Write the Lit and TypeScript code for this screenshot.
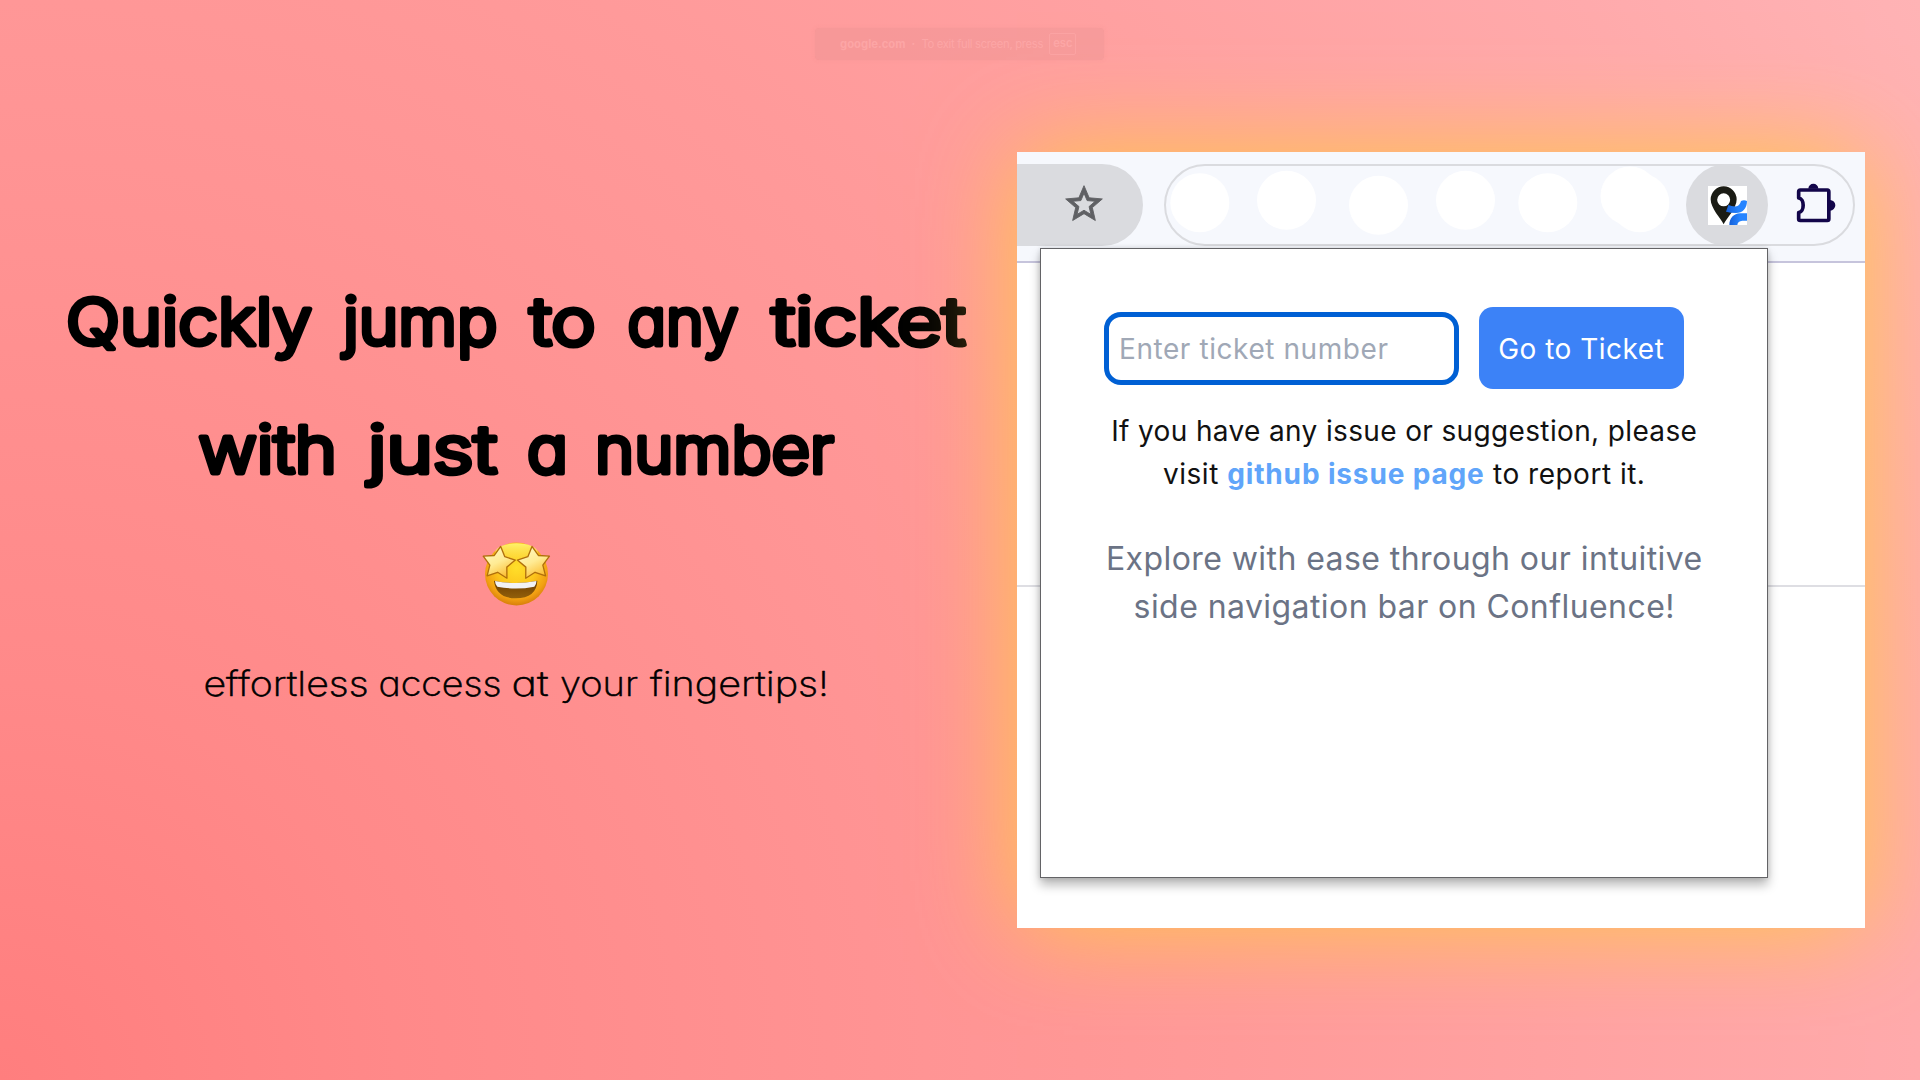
import { LitElement, html, svg, css } from "lit";
import { customElement } from "lit/decorators.js";

type Word = { t: string; x: number; w: number; y: number };

const HEADLINE: Word[] = [
  { t: "Quickly", x: 66, w: 246, y: 75 },
  { t: "jump", x: 343, w: 154.5, y: 75 },
  { t: "to", x: 529.5, w: 66, y: 75 },
  { t: "any", x: 627.5, w: 111, y: 75 },
  { t: "ticket", x: 771.5, w: 194, y: 75 },
  { t: "with", x: 198.5, w: 138.5, y: 203 },
  { t: "just", x: 368, w: 129, y: 203 },
  { t: "a", x: 527, w: 41, y: 203 },
  { t: "number", x: 595, w: 239, y: 203 },
];

const TAGLINE: Word[] = [
  { t: "effortless", x: 203.5, w: 165, y: 41 },
  { t: "access", x: 378.5, w: 123, y: 41 },
  { t: "at", x: 511.5, w: 37, y: 41 },
  { t: "your", x: 560, w: 78, y: 41 },
  { t: "fingertips!", x: 650, w: 179, y: 41 },
];

const words = (list: Word[]) =>
  list.map((w) => svg`<text x=${w.x} y=${w.y} textLength=${w.w} lengthAdjust="spacingAndGlyphs">${w.t}</text>`);

@customElement("promo-copy")
export class PromoCopy extends LitElement {
  static styles = css`
    :host { display: flex; flex-direction: column; width: 1017px; padding-top: 270px; box-sizing: border-box; }
    svg { display: block; }
    .headline text {
      font: 300 65px Inter, "Noto Sans", sans-serif;
      font-feature-settings: "cv11" 1, "ss03" 1;
      stroke: #000; stroke-width: 5; stroke-linejoin: round; fill: #000;
    }
    .emoji { margin: 0 0 0 480px; }
    .tagline { margin-top: 43px; }
    .tagline text {
      font: 200 34px Inter, "Noto Sans", sans-serif;
      font-feature-settings: "cv11" 1;
      stroke: #000; stroke-width: 0.6; stroke-linejoin: round;
    }
  `;
  render() {
    const star = (cx: number, rot: number) => {
      const pts: string[] = [];
      for (let i = 0; i < 10; i++) {
        const r = i % 2 ? 27 : 51;
        const a = (Math.PI / 5) * i - Math.PI / 2 + rot;
        pts.push(`${(cx + r * Math.cos(a)).toFixed(1)},${(130 + r * Math.sin(a)).toFixed(1)}`);
      }
      return svg`<polygon points=${pts.join(" ")} fill="url(#s)" stroke="#b06f0c" stroke-width="4" stroke-linejoin="round"/>`;
    };
    return html`
      <svg class="headline" width="1017" height="264" viewBox="0 0 1017 264">${words(HEADLINE)}</svg>
      <svg class="emoji" width="73" height="78" viewBox="60 42 219 234">
        <defs>
          <radialGradient id="f" cx=".5" cy=".4" r=".62">
            <stop offset="0" stop-color="#ffdf2a" /><stop offset=".5" stop-color="#fcc41c" />
            <stop offset=".8" stop-color="#f2a012" /><stop offset="1" stop-color="#d3780a" />
          </radialGradient>
          <linearGradient id="h" x1="0" y1="0" x2="0" y2="1">
            <stop offset="0" stop-color="#fff36a" /><stop offset="1" stop-color="#fff36a" stop-opacity="0" />
          </linearGradient>
          <linearGradient id="s" x1=".2" y1="0" x2=".7" y2="1">
            <stop offset="0" stop-color="#fff9c4" /><stop offset=".5" stop-color="#ffeb94" /><stop offset="1" stop-color="#fbb929" />
          </linearGradient>
          <linearGradient id="m" x1="0" y1="0" x2="0" y2="1">
            <stop offset="0" stop-color="#6b3c02" /><stop offset="1" stop-color="#93600a" />
          </linearGradient>
        </defs>
        <circle cx="169.5" cy="162" r="94.5" fill="url(#f)" />
        <ellipse cx="169.5" cy="98" rx="64" ry="28" fill="url(#h)" />
        <path d="M102 182 Q169.500 196 232 182 Q230 234 167 235 Q108 234 102 182Z" fill="url(#m)" />
        <path d="M105 183 Q167 195 229 183 Q230 193 223 200 Q167 211 112 200 Q105 193 105 183Z" fill="#f2f2f5" />
        ${star(116, 0.12)} ${star(222, -0.12)}
      </svg>
      <svg class="tagline" width="1017" height="60" viewBox="0 0 1017 60">${words(TAGLINE)}</svg>
    `;
  }
}

@customElement("browser-shot")
export class BrowserShot extends LitElement {
  static styles = css`
    :host {
      display: block; position: relative; width: 848px; height: 776px; margin-top: 152px;
      background: #fff; box-shadow: 0 0 94px rgb(255, 200, 76);
      font-family: Inter, "Liberation Sans", sans-serif;
    }
    .toolbar {
      display: flex; align-items: flex-start; height: 111px; box-sizing: border-box; padding-top: 12px;
      background: #f6f8fd; border-bottom: 2px solid #c6c4dc;
    }
    .address { width: 125.5px; height: 82px; border-radius: 0 41px 41px 0; background: #dadbdf; display: flex; }
    .address svg { margin: 18px 0 0 45px; }
    .extensions {
      display: flex; margin-left: 21.5px; width: 691px; height: 82px; box-sizing: border-box;
      border: 2px solid #dadbdf; border-radius: 41px;
    }
    .blobs { width: 520px; height: 78px; flex: none; }
    .active {
      flex: none; width: 82px; height: 82px; border-radius: 50%; background: #dadbdf; margin-top: -2px;
      display: flex; align-items: center; justify-content: center;
    }
    .puzzle { margin: 15.5px 0 0 27px; flex: none; }
    .divider { height: 2px; margin-top: 322px; background: #dedee3; }
    .popup {
      position: absolute; left: 23px; top: 96px; width: 727.5px; height: 630px; box-sizing: border-box;
      border: 1.5px solid #636366; background: #fff; padding: 58px 62px 0 63px;
      box-shadow: 0 7px 10px rgba(0, 0, 0, 0.28), 0 0 5px rgba(0, 0, 0, 0.14);
    }
    .row { display: flex; align-items: center; gap: 19.5px; }
    .field {
      width: 355px; height: 73px; box-sizing: border-box; border: 5px solid #0060d4; border-radius: 17px;
      padding: 1px 10px 0 10px; display: flex; align-items: center; font-size: 28px; letter-spacing: 0.57px;
      color: #a0a8b6; white-space: nowrap;
    }
    .go {
      width: 205.5px; height: 82px; border: 0; border-radius: 14px; background: #3c82f7; color: #fff; padding: 1px 0 0;
      font: 400 28px Inter, "Liberation Sans", sans-serif; letter-spacing: 0.5px; white-space: nowrap;
    }
    .help {
      margin: 21px 0 0; font-size: 28px; line-height: 43.3px; letter-spacing: 0.36px;
      text-align: center; color: #111; white-space: nowrap;
    }
    .help .second { letter-spacing: 0.5px; }
    .help b { font-weight: 700; letter-spacing: 0.85px; color: #60a5fa; }
    .about {
      margin: 38px 0 0; font-size: 32px; line-height: 48.5px; letter-spacing: 0.43px;
      text-align: center; color: #6b7385; white-space: nowrap;
    }
    .line { display: block; width: max-content; margin: 0 auto; }
  `;
  render() {
    return html`
      <div class="toolbar">
        <div class="address">
          <svg width="44" height="44" viewBox="0 0 24 24" fill="#5f6064" stroke="#5f6064" stroke-width=".5"><path d="M22 9.240l-7.190-.62L12 2 9.190 8.630 2 9.240l5.460 4.730L5.820 21 12 17.270 18.180 21l-1.630-7.030L22 9.240zM12 15.400l-3.760 2.270 1-4.280-3.320-2.880 4.380-.38L12 6.100l1.710 4.040 4.380.38-3.320 2.880 1 4.280L12 15.400z" /></svg>
        </div>
        <div class="extensions">
          <svg class="blobs" viewBox="1167 166 520 78" fill="#fff">
            <circle cx="1200.8" cy="202.7" r="29.5" /><circle cx="1287.5" cy="200.3" r="29.5" />
            <circle cx="1379.5" cy="205.3" r="29.5" /><circle cx="1466.5" cy="200.3" r="29.5" />
            <circle cx="1548.8" cy="202.7" r="29.5" /><circle cx="1631" cy="196" r="29.5" />
            <circle cx="1640.8" cy="202.7" r="29.5" />
          </svg>
          <div class="active">
            <svg width="39" height="39" viewBox="144 93 117 117">
              <defs><linearGradient id="b" x1="0" x2="1"><stop offset="0" stop-color="#1660d8" /><stop offset=".6" stop-color="#2684ff" /></linearGradient></defs>
              <rect x="144" y="93" width="117" height="117" fill="#fff" />
              <path fill-rule="evenodd" fill="#1a1b14" d="M191 208C182 190 152 160 152 133A39 39 0 0 1 230 133C230 160 200 190 191 208ZM191 115A19.500 19.500 0 1 0 191 154A19.500 19.500 0 1 0 191 115Z" />
              <path fill="url(#b)" d="M205 150C216 154 227 156 234 152C239 149 241 145 243 138Q252 134 261 138C261 160 248 174 228 174Q212 174 198 170Z" />
              <path fill="url(#b)" d="M208 210C208 190 222 175 240 175H261V197H247C238 198 233 202 232 210Z" />
            </svg>
          </div>
          <svg class="puzzle" width="43" height="43" viewBox="408 80 129 129">
            <path d="M448 100A15 15 0 0 1 478 100ZM513 134A16 16 0 0 1 513 166Z" fill="#13064a" />
            <path d="M424 104H505Q509.500 104 509.500 109V191Q509.500 195.500 505 195.500H424Q419 195.500 419 191V172C437 170 437 130 419 128V109Q419 104 424 104Z" fill="none" stroke="#13064a" stroke-width="11" stroke-linejoin="round" />
          </svg>
        </div>
      </div>
      <div class="divider"></div>
      <div class="popup">
        <div class="row">
          <div class="field">Enter ticket number</div>
          <button class="go">Go to Ticket</button>
        </div>
        <p class="help">
          <span class="line">If you have any issue or suggestion, please</span>
          <span class="line second">visit <b>github issue page</b> to report it.</span>
        </p>
        <p class="about">
          <span class="line">Explore with ease through our intuitive</span>
          <span class="line">side navigation bar on Confluence!</span>
        </p>
      </div>
    `;
  }
}

@customElement("app-root")
export class AppRoot extends LitElement {
  static styles = css`
    :host {
      display: flex; position: relative; width: 1920px; height: 1080px; overflow: hidden;
      background: radial-gradient(circle 2203px at 0 100%, #ff7e7e 0%, #ff8989 18%, #ff9494 42%, #ff9a9a 56%, #ffa1a2 70%, #ffaaac 87%, #ffb3b5 100%);
    }
    .toast {
      position: absolute; left: 815px; top: 28px; width: 289px; height: 32px; box-sizing: border-box; padding-left: 25px;
      border-radius: 4px; background: rgba(225, 140, 140, 0.25); display: flex; align-items: center;
      box-shadow: 0 0 4px rgba(225, 140, 140, 0.2);
      font: 11.3px Inter, sans-serif; color: rgba(255, 172, 172, 0.7);
    }
    .dot { margin: 0 6px; font-weight: 700; }
    .hint { width: 123px; letter-spacing: -0.33px; white-space: nowrap; }
    .key {
      margin-left: 5px; width: 27px; height: 22px; box-sizing: border-box; border: 1px solid rgba(255, 172, 172, 0.5);
      border-radius: 2px; text-align: center; line-height: 19px; font-weight: 600;
    }
  `;
  render() {
    return html`
      <promo-copy></promo-copy>
      <browser-shot></browser-shot>
      <div class="toast"><b>google.com</b><span class="dot">·</span><span class="hint">To exit full screen, press</span><span class="key">esc</span></div>
    `;
  }
}
